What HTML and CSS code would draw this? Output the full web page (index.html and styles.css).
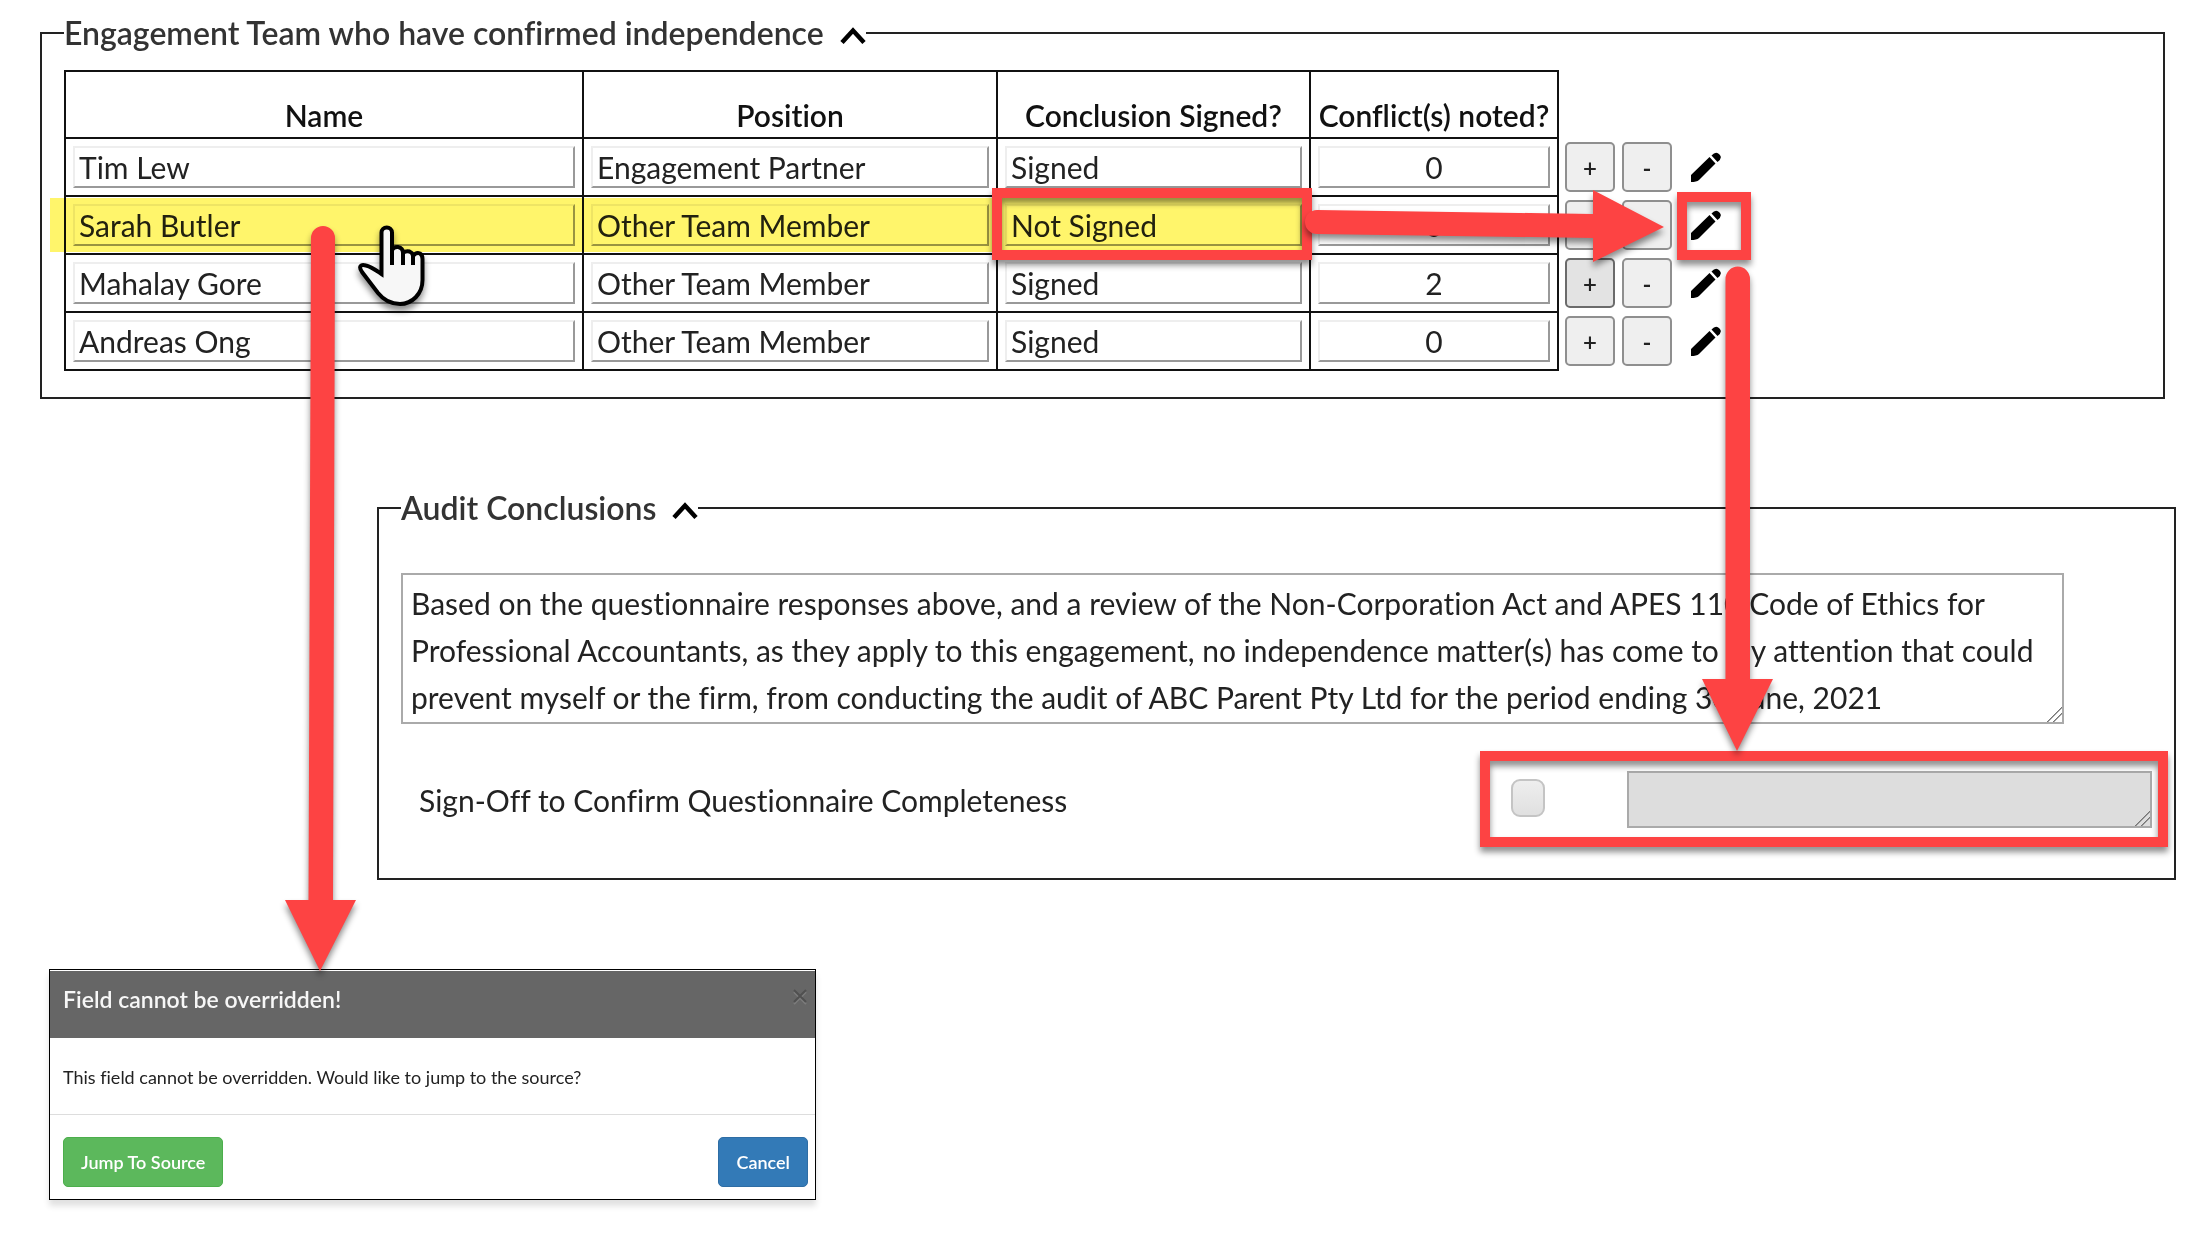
FILE: index.html
```html
<!DOCTYPE html>
<html lang="en">
<head>
<meta charset="utf-8">
<title>Engagement team independence</title>
<link rel="stylesheet" href="styles.css">
</head>
<body>
<svg class="symbols" aria-hidden="true">
  <symbol id="chevron-up" viewBox="0 0 26 17"><path d="M2 15.500 13 3.500 24 15.500" fill="none" stroke="#000" stroke-width="4.500"/></symbol>
  <symbol id="pencil" viewBox="0 0 30 30"><path d="M0 23 18.500 5 24.500 11.500 8 28Q5.500 30 0 30ZM20.500 3.500Q25-1.500 28.500 2.500 32 6 26.500 10Z" fill="#000"/></symbol>
</svg>
<main class="page">
  <fieldset class="group team">
    <legend>Engagement Team who have confirmed independence
      <button type="button" class="toggle" aria-label="Collapse engagement team"><svg><use href="#chevron-up"/></svg></button>
    </legend>
    <table class="team-table">
      <colgroup><col class="col-name"><col class="col-position"><col class="col-signed"><col class="col-conflicts"><col class="col-actions"></colgroup>
      <thead>
        <tr><th>Name</th><th>Position</th><th>Conclusion Signed?</th><th>Conflict(s) noted?</th><td class="actions-cell"></td></tr>
      </thead>
      <tbody>
        <tr>
          <td><input type="text" aria-label="Name" value="Tim Lew"></td>
          <td><input type="text" aria-label="Position" value="Engagement Partner"></td>
          <td><input type="text" aria-label="Conclusion signed" value="Signed"></td>
          <td><input type="text" class="count" aria-label="Conflicts noted" value="0"></td>
          <td class="actions-cell"><div class="actions"><button type="button" class="step">+</button><button type="button" class="step">-</button><button type="button" class="edit" aria-label="Edit Tim Lew"><svg><use href="#pencil"/></svg></button></div></td>
        </tr>
        <tr>
          <td><input type="text" aria-label="Name" value="Sarah Butler"></td>
          <td><input type="text" aria-label="Position" value="Other Team Member"></td>
          <td><input type="text" aria-label="Conclusion signed" value="Not Signed"></td>
          <td><input type="text" class="count" aria-label="Conflicts noted" value="0"></td>
          <td class="actions-cell"><div class="actions"><button type="button" class="step">+</button><button type="button" class="step">-</button><button type="button" class="edit" aria-label="Edit Sarah Butler"><svg><use href="#pencil"/></svg></button></div></td>
        </tr>
        <tr>
          <td><input type="text" aria-label="Name" value="Mahalay Gore"></td>
          <td><input type="text" aria-label="Position" value="Other Team Member"></td>
          <td><input type="text" aria-label="Conclusion signed" value="Signed"></td>
          <td><input type="text" class="count" aria-label="Conflicts noted" value="2"></td>
          <td class="actions-cell"><div class="actions"><button type="button" class="step active">+</button><button type="button" class="step">-</button><button type="button" class="edit" aria-label="Edit Mahalay Gore"><svg><use href="#pencil"/></svg></button></div></td>
        </tr>
        <tr>
          <td><input type="text" aria-label="Name" value="Andreas Ong"></td>
          <td><input type="text" aria-label="Position" value="Other Team Member"></td>
          <td><input type="text" aria-label="Conclusion signed" value="Signed"></td>
          <td><input type="text" class="count" aria-label="Conflicts noted" value="0"></td>
          <td class="actions-cell"><div class="actions"><button type="button" class="step">+</button><button type="button" class="step">-</button><button type="button" class="edit" aria-label="Edit Andreas Ong"><svg><use href="#pencil"/></svg></button></div></td>
        </tr>
      </tbody>
    </table>
  </fieldset>

  <fieldset class="group conclusions">
    <legend>Audit Conclusions
      <button type="button" class="toggle" aria-label="Collapse audit conclusions"><svg><use href="#chevron-up"/></svg></button>
    </legend>
    <textarea class="statement" aria-label="Conclusion">Based on the questionnaire responses above, and a review of the Non-Corporation Act and APES 110 Code of Ethics for Professional Accountants, as they apply to this engagement, no independence matter(s) has come to my attention that could prevent myself or the firm, from conducting the audit of ABC Parent Pty Ltd for the period ending 30 June, 2021</textarea>
    <div class="sign-off">
      <label for="confirm">Sign-Off to Confirm Questionnaire Completeness</label>
      <input type="checkbox" id="confirm">
      <textarea class="signature" aria-label="Signed by" readonly></textarea>
    </div>
  </fieldset>

  <section class="dialog" role="dialog" aria-labelledby="dialog-title">
    <header class="dialog-header">
      <h2 id="dialog-title">Field cannot be overridden!</h2>
      <button type="button" class="close" aria-label="Close"><svg viewBox="0 0 14 14"><path d="M1 3 13 15M13 3 1 15" stroke="#7c7c7c"/><path d="M1 1 13 13M13 1 1 13" stroke="#505050"/></svg></button>
    </header>
    <p class="dialog-body">This field cannot be overridden. Would like to jump to the source?</p>
    <footer class="dialog-footer">
      <button type="button" class="btn btn-success">Jump To Source</button>
      <button type="button" class="btn btn-primary">Cancel</button>
    </footer>
  </section>

  <div class="highlight"></div>
  <svg class="annotations" viewBox="0 0 2200 1251" aria-hidden="true">
    <g class="shadow" fill="none" stroke="#fd4343" stroke-width="10">
      <rect x="997" y="193" width="310" height="62"/>
      <rect x="1682" y="197" width="64" height="58"/>
      <rect x="1485" y="756" width="678" height="86"/>
    </g>
    <g class="shadow" fill="#fd4343">
      <path d="M1317 210 1593 214V190L1664 227 1593 262V238L1317 234A12 12 0 0 1 1317 210Z"/>
      <path d="M1725.500 279A12.250 12.500 0 0 1 1750 279V679H1773L1737 751 1702 679H1725.500Z"/>
      <path d="M311 238A12 12 0 0 1 335 238L333 900H356L320 971 285 900H308.500Z"/>
    </g>
    <g class="shadow" transform="translate(340 210)" fill="#f7f7f7" stroke="#000" stroke-width="4">
      <path d="M41.500 64V22.500A5.250 5 0 0 1 52 22.500V40Q54 36.500 58 37 63 38 63 43 66 40.500 69.500 41.500 73 43 73 46 76 42 80 43.500 82.500 45 82.500 49V70C82.500 84 72 94 60 94 49 94 42 88 38 83L22 62C18 56 21 54 26 55.500 32 57 37 61 41.500 64Z"/>
      <path d="M52 40V55M63 43V55M73 45V55"/>
    </g>
  </svg>
</main>
</body>
</html>
```
FILE: styles.css
```css
* { box-sizing: border-box; }

body {
  margin: 0;
  background: #fff;
  color: #222;
  font-family: Lato, sans-serif;
  font-size: 30px;
  font-variant-ligatures: none;
}

input, textarea, button { font: inherit; font-variant-ligatures: none; color: inherit; }
button { padding: 0; border: 0; background: none; }
svg { display: block; }
.symbols { position: absolute; width: 0; height: 0; }

.page {
  position: relative;
  padding: 10px 24px 50px 40px;
}

/* Collapsible groups */
.group {
  margin: 0;
  border: 2px solid #222;
}

legend {
  display: flex;
  align-items: center;
  gap: 16px;
  height: 46px;
  padding: 0 0 2px;
  color: #333;
  font-size: 32px;
  font-weight: 600;
}

.toggle { padding-top: 6px; }
.toggle svg { width: 26px; height: 17px; }

/* Engagement team */
.team {
  margin-right: 11px;
  padding: 14px 22px 26px;
}

.team-table {
  table-layout: fixed;
  width: 1660px;
  border-collapse: collapse;
}

.col-name { width: 518px; }
.col-position { width: 414px; }
.col-signed { width: 313px; }
.col-conflicts { width: 248px; }

.team-table th {
  height: 67px;
  padding: 0 0 4px;
  border: 2px solid #111;
  color: #111;
  font-weight: 600;
  line-height: 36px;
  vertical-align: bottom;
  white-space: nowrap;
}

.team-table td {
  height: 58px;
  padding: 7px;
  border: 2px solid #111;
}

.team-table input {
  display: block;
  width: 100%;
  height: 42px;
  padding: 0 4px;
  border: 2px solid;
  border-color: #eee #999 #999 #eee;
  background: #fff;
  outline: 0;
}

.team-table .count { text-align: center; }

.team-table .actions-cell {
  padding: 0 0 0 6px;
  border-width: 0 0 0 2px;
}

.actions {
  display: flex;
  align-items: center;
  gap: 7px;
}

.step {
  width: 50px;
  height: 50px;
  border: 2px solid #8f8f8f;
  border-radius: 5px;
  background: #efefef;
  font-size: 24px;
  font-weight: 600;
}

.step.active { border-color: #6b6b6b; background: #e3e3e3; }

.edit { margin-left: 12px; }
.edit svg { width: 30px; height: 30px; }

/* Audit conclusions */
.conclusions {
  margin: 86px 0 0 337px;
  padding: 42px 22px 50px 22px;
}

textarea {
  display: block;
  border: 2px solid #aaa;
  outline: 0;
}

textarea::-webkit-scrollbar { width: 22px; height: 22px; }
textarea::-webkit-resizer {
  background: linear-gradient(135deg, transparent 48%, #777 49% 53%, transparent 54% 68%, #777 69% 73%, transparent 74%);
}

.statement {
  width: 95%;
  height: 151px;
  padding: 5px 8px 1px;
  line-height: 47px;
  overflow: hidden;
}

.sign-off {
  display: grid;
  grid-template-columns: 1fr 116px 525px;
  align-items: center;
  margin-top: 47px;
  padding-left: 18px;
}

.sign-off input {
  appearance: none;
  width: 34px;
  height: 38px;
  margin: 0 0 4px;
  border: 2px solid #c4c4c4;
  border-radius: 9px;
  background: linear-gradient(#eee, #e0e0e0);
}

.signature {
  height: 57px;
  background: #ddd;
}

/* Override dialog */
.dialog {
  width: 767px;
  margin: 89px 0 0 9px;
  padding-top: 1px;
  border: 1px solid #000;
  background: #fff;
  box-shadow: 0 6px 6px rgba(0, 0, 0, .12);
  font-size: 18px;
  line-height: 28px;
}

.dialog-header {
  display: flex;
  justify-content: space-between;
  align-items: flex-start;
  padding: 14px 8px 25px 13px;
  background: #666;
  color: #f7f7f7;
}

.dialog-header h2 {
  margin: 0;
  font-size: 23px;
  font-weight: 600;
}

.close { padding-top: 4px; }
.close svg { width: 14px; height: 14px; overflow: visible; fill: none; stroke-width: 2; }

.dialog-body {
  margin: 0;
  padding: 25px 13px 23px;
}

.dialog-footer {
  display: flex;
  justify-content: space-between;
  padding: 22px 7px 12px 13px;
  border-top: 1px solid #ddd;
}

.btn {
  height: 50px;
  padding: 0 17px;
  border: 1px solid;
  border-radius: 5px;
  color: #fff;
  font-weight: 600;
}

.btn-success { border-color: #4cae4c; background: #5cb85c; }
.btn-primary { border-color: #2e6da4; background: #337ab7; }

/* Marks drawn over the form */
.highlight {
  position: absolute;
  left: 50px;
  top: 198px;
  width: 1252px;
  height: 54px;
  background: #fff56b;
  mix-blend-mode: multiply;
}

.annotations {
  position: absolute;
  left: 0;
  top: 0;
  width: 2200px;
  height: 1251px;
  pointer-events: none;
}

.shadow { filter: drop-shadow(0 5px 3px rgba(0, 0, 0, .45)); }
```
